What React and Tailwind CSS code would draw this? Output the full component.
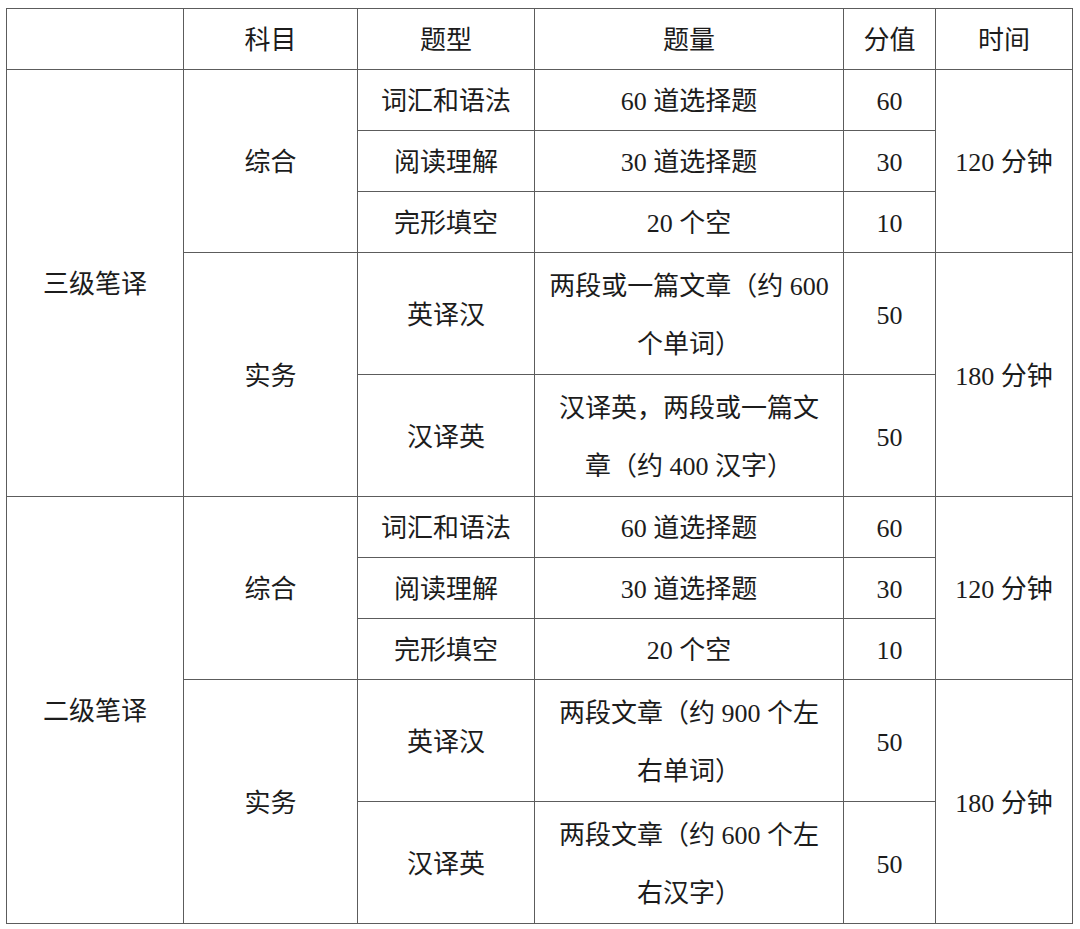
import React from "react";

const line = "border-[#5c5c5c]";

function Cell({ col, row, span = 1, children }) {
  return (
    <div
      className={`flex items-center justify-center text-center border-r border-b ${line}`}
      style={{ gridColumn: col, gridRow: `${row} / span ${span}` }}
    >
      <div className="pt-[4px] leading-[58px]">{children}</div>
    </div>
  );
}

function Level({ start, name, practice }) {
  return (
    <>
      <Cell col={1} row={start} span={7}>{name}</Cell>
      <Cell col={2} row={start} span={3}>综合</Cell>
      <Cell col={2} row={start + 3} span={4}>实务</Cell>

      <Cell col={3} row={start}>词汇和语法</Cell>
      <Cell col={3} row={start + 1}>阅读理解</Cell>
      <Cell col={3} row={start + 2}>完形填空</Cell>
      <Cell col={3} row={start + 3} span={2}>英译汉</Cell>
      <Cell col={3} row={start + 5} span={2}>汉译英</Cell>

      <Cell col={4} row={start}>60 道选择题</Cell>
      <Cell col={4} row={start + 1}>30 道选择题</Cell>
      <Cell col={4} row={start + 2}>20 个空</Cell>
      <Cell col={4} row={start + 3} span={2}>{practice[0]}</Cell>
      <Cell col={4} row={start + 5} span={2}>{practice[1]}</Cell>

      <Cell col={5} row={start}>60</Cell>
      <Cell col={5} row={start + 1}>30</Cell>
      <Cell col={5} row={start + 2}>10</Cell>
      <Cell col={5} row={start + 3} span={2}>50</Cell>
      <Cell col={5} row={start + 5} span={2}>50</Cell>

      <Cell col={6} row={start} span={3}>120 分钟</Cell>
      <Cell col={6} row={start + 3} span={4}>180 分钟</Cell>
    </>
  );
}

export default function App() {
  return (
    <div className="min-h-screen bg-white pl-[6px] pt-[8px]">
      <div
        className={`grid w-[1067px] border-t border-l ${line} text-[26px] text-[#1c1c1c]`}
        style={{
          fontFamily: '"Liberation Serif", "Noto Sans CJK SC", serif',
          gridTemplateColumns: "177px 174px 177px 309px 92px 137px",
          gridTemplateRows: "repeat(15, 61px)",
        }}
      >
        <Cell col={1} row={1}></Cell>
        <Cell col={2} row={1}>科目</Cell>
        <Cell col={3} row={1}>题型</Cell>
        <Cell col={4} row={1}>题量</Cell>
        <Cell col={5} row={1}>分值</Cell>
        <Cell col={6} row={1}>时间</Cell>

        <Level
          start={2}
          name="三级笔译"
          practice={[
            <>两段或一篇文章（约 600<br />个单词）</>,
            <>汉译英，两段或一篇文<br />章（约 400 汉字）</>,
          ]}
        />
        <Level
          start={9}
          name="二级笔译"
          practice={[
            <>两段文章（约 900 个左<br />右单词）</>,
            <>两段文章（约 600 个左<br />右汉字）</>,
          ]}
        />
      </div>
    </div>
  );
}
